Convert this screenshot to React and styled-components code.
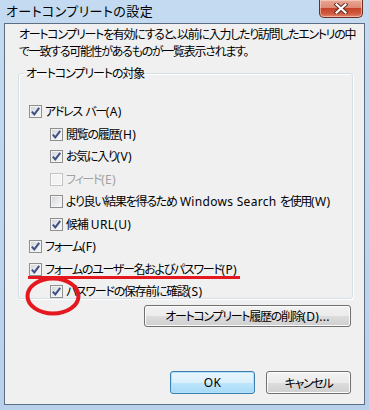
import React from "react";
import styled, { createGlobalStyle } from "styled-components";

const Global = createGlobalStyle`
  html, body { margin: 0; padding: 0; background: #bcd5ef; }
  * { box-sizing: border-box; }
`;

const FONT = `"Noto Sans", "Noto Sans CJK JP", sans-serif`;

const Window = styled.div`
  width: 369px;
  height: 410px;
  display: flex;
  flex-direction: column;
  padding: 0 4px 5px 4px;
  background: linear-gradient(to bottom, #c4daf1 0%, #bfd6ee 50%, #b8d0ea 100%);
  font-family: ${FONT};
  font-feature-settings: "palt";
  color: #000;
`;

const TitleBar = styled.div`
  height: 23px;
  display: flex;
  align-items: flex-start;
  flex-shrink: 0;
`;

const Title = styled.div`
  padding-left: 2px;
  font-size: 13px;
  line-height: 23px;
  letter-spacing: 0.4px;
  color: #000;
`;

const CloseButton = styled.div`
  margin-left: auto;
  margin-right: 2px;
  width: 44px;
  height: 18px;
  border: 1px solid #6b2d24;
  border-top: none;
  border-radius: 0 0 5px 5px;
  background: linear-gradient(to bottom, #e9a796 0%, #dd8a74 45%, #c5432a 50%, #cf5a3f 80%, #e08a6e 100%);
  box-shadow: inset 0 0 0 1px rgba(255, 220, 210, 0.55);
  display: flex;
  align-items: center;
  justify-content: center;
`;

const Content = styled.div`
  position: relative;
  flex: 1;
  display: flex;
  flex-direction: column;
  background: #f0f0f0;
  border: 1px solid #5d6e83;
  padding: 2px 11px 10px 13px;
  font-size: 12px;
  letter-spacing: -1.3px;
`;

const Description = styled.p`
  margin: 0;
  padding-left: 1px;
  line-height: 17px;
  font-size: 12px;
  letter-spacing: -1.3px;
  white-space: nowrap;
`;

const Latin = styled.span`
  letter-spacing: 0.3px;
`;

const Group = styled.fieldset`
  margin: 5px 0 0 0;
  padding: 23px 10px 0 10px;
  border: 1px solid #d5dfe5;
  border-radius: 3px;
  box-shadow: 1px 1px 0 #ffffff, inset 1px 1px 0 #ffffff;
  min-width: 0;
  height: 234px;
`;

const Legend = styled.legend`
  margin-left: -5px;
  padding: 0 2px;
  font-size: 12px;
  line-height: 17px;
  letter-spacing: -1.1px;
`;

const List = styled.div`
  display: flex;
  flex-direction: column;
  gap: 9.5px;
`;

const Item = styled.label`
  position: relative;
  align-self: flex-start;
  display: inline-flex;
  align-items: center;
  gap: 3px;
  height: 13px;
  margin-left: ${(p) => (p.$level ? 21 : 0)}px;
  font-size: 12px;
  line-height: 13px;
  white-space: nowrap;
  color: ${(p) => (p.$disabled ? "#a0a0a0" : "#000")};

  ${(p) =>
    p.$marked &&
    `
    &::after {
      content: "";
      position: absolute;
      left: -1px;
      right: -3px;
      bottom: -3px;
      height: 3px;
      background: #e5171f;
    }
  `}
`;

const Text = styled.span`
  white-space: pre;
`;

const Box = styled.span`
  width: 13px;
  height: 13px;
  flex-shrink: 0;
  display: inline-flex;
  align-items: center;
  justify-content: center;
  border: 1px solid ${(p) => (p.$disabled ? "#c3c3c3" : "#8e8f8f")};
  background: ${(p) =>
    p.$disabled
      ? "#f4f4f4"
      : "linear-gradient(135deg, #cdd0d6 0%, #e6e7ea 45%, #fafafa 100%)"};
  box-shadow: inset 0 0 0 1px ${(p) => (p.$disabled ? "#fbfbfb" : "#f3f3f3")};
`;

const ButtonRow = styled.div`
  display: flex;
  justify-content: flex-end;
  gap: 11px;
  padding-right: 2px;
  margin-top: ${(p) => (p.$bottom ? "auto" : "6px")};
`;

const Button = styled.div`
  width: ${(p) => p.$w}px;
  height: ${(p) => p.$h}px;
  display: flex;
  align-items: center;
  justify-content: center;
  border: 1px solid ${(p) => (p.$default ? "#3c7fb1" : "#707070")};
  border-radius: 3px;
  font-size: 12px;
  white-space: pre;
  background: ${(p) =>
    p.$default
      ? "linear-gradient(to bottom, #eaf6fd 0%, #d9f0fc 50%, #bee6fd 51%, #a7d9f5 100%)"
      : "linear-gradient(to bottom, #f2f2f2 0%, #ebebeb 50%, #dddddd 51%, #cfcfcf 100%)"};
  box-shadow: inset 0 0 0 1px ${(p) => (p.$default ? "#b2e0fa" : "#fcfcfc")};
`;

const Annotation = styled.svg`
  position: absolute;
  left: 18px;
  top: 251px;
  pointer-events: none;
`;

function Check() {
  return (
    <svg width="11" height="11" viewBox="0 0 11 11">
      <path
        d="M1.8 5.6 L4.3 8.4 L9.2 1.8"
        fill="none"
        stroke="#3e5183"
        strokeWidth="2"
        strokeLinejoin="miter"
      />
    </svg>
  );
}

function CheckItem({ parts, checked, disabled, level, marked }) {
  return (
    <Item $level={level} $disabled={disabled} $marked={marked}>
      <Box $disabled={disabled}>{checked && <Check />}</Box>
      <Text>
        {parts.map((p, i) =>
          p.latin ? <Latin key={i}>{p.t}</Latin> : <React.Fragment key={i}>{p.t}</React.Fragment>
        )}
      </Text>
    </Item>
  );
}

const J = (t) => ({ t });
const L = (t) => ({ t, latin: true });

const items = [
  { id: "a", parts: [J("アドレス"), L(" "), J("バー"), L("(A)")], checked: true, level: 0 },
  { id: "h", parts: [J("閲覧の履歴"), L("(H)")], checked: true, level: 1 },
  { id: "v", parts: [J("お気に入り"), L("(V)")], checked: true, level: 1 },
  { id: "e", parts: [J("フィード"), L("(E)")], checked: false, disabled: true, level: 1 },
  {
    id: "w",
    parts: [J("より良い結果を得るため"), L(" Windows Search "), J("を使用"), L("(W)")],
    checked: false,
    level: 1,
  },
  { id: "u", parts: [J("候補"), L(" URL(U)")], checked: true, level: 1 },
  { id: "f", parts: [J("フォーム"), L("(F)")], checked: true, level: 0 },
  {
    id: "p",
    parts: [J("フォームのユーザー名およびパスワード"), L("(P)")],
    checked: true,
    level: 0,
    marked: true,
  },
  { id: "s", parts: [J("パスワードの保存前に確認"), L("(S)")], checked: true, level: 1 },
];

export default function App() {
  return (
    <>
      <Global />
      <Window>
        <TitleBar>
          <Title>オートコンプリートの設定</Title>
          <CloseButton>
            <svg width="14" height="11" viewBox="0 0 14 11">
              <path
                d="M2.5 1.5 L11.5 9.5 M11.5 1.5 L2.5 9.5"
                stroke="#5a2a22"
                strokeWidth="4"
                strokeLinecap="square"
              />
              <path
                d="M2.5 1.5 L11.5 9.5 M11.5 1.5 L2.5 9.5"
                stroke="#ffffff"
                strokeWidth="2.2"
                strokeLinecap="square"
              />
            </svg>
          </CloseButton>
        </TitleBar>
        <Content>
          <Description>
            オートコンプリートを有効にすると、以前に入力したり訪問したエントリの中
            <br />
            で一致する可能性があるものが一覧表示されます。
          </Description>
          <Group>
            <Legend>オートコンプリートの対象</Legend>
            <List>
              {items.map(({ id, ...it }) => (
                <CheckItem key={id} {...it} />
              ))}
            </List>
          </Group>
          <ButtonRow>
            <Button $w={207} $h={22}>
              オートコンプリート履歴の削除<Latin>(D)...</Latin>
            </Button>
          </ButtonRow>
          <ButtonRow $bottom>
            <Button $w={85} $h={23} $default>
              <Latin>OK</Latin>
            </Button>
            <Button $w={85} $h={23}>
              キャンセル
            </Button>
          </ButtonRow>
          <Annotation width="60" height="42" viewBox="0 0 60 42">
            <ellipse
              cx="30"
              cy="21"
              rx="25.5"
              ry="17.5"
              fill="none"
              stroke="#e5171f"
              strokeWidth="4"
            />
          </Annotation>
        </Content>
      </Window>
    </>
  );
}
